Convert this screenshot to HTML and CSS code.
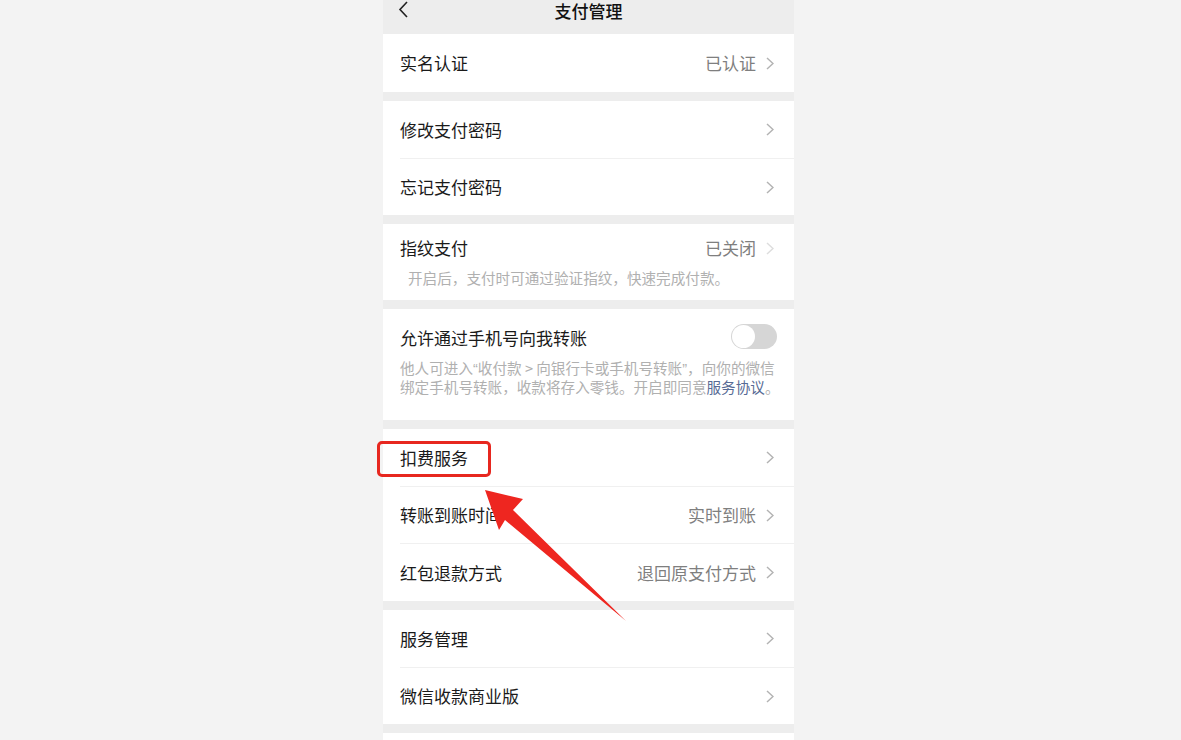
FILE: index.html
```html
<!DOCTYPE html>
<html lang="zh">
<head>
<meta charset="utf-8">
<title>支付管理</title>
<link rel="stylesheet" href="styles.css">
</head>
<body>
<div class="stage">
  <div class="phone">
    <header class="topbar">
      <span class="back"><svg width="12" height="18" viewBox="0 0 12 18"><polyline points="9,1 2,8.5 9,16" fill="none" stroke="#222" stroke-width="1.6"/></svg></span>
      <span class="title">支付管理</span>
      <span class="back"></span>
    </header>

    <section class="card">
      <div class="row row-tall"><div class="row-body"><span class="label">实名认证</span><span class="value">已认证</span><svg class="chev" width="8" height="13" viewBox="0 0 8 13"><polyline points="1,1 7,6.5 1,12"/></svg></div></div>
    </section>

    <section class="card">
      <div class="row"><div class="row-body"><span class="label">修改支付密码</span><svg class="chev" width="8" height="13" viewBox="0 0 8 13"><polyline points="1,1 7,6.5 1,12"/></svg></div></div>
      <div class="row"><div class="row-body divided"><span class="label">忘记支付密码</span><svg class="chev" width="8" height="13" viewBox="0 0 8 13"><polyline points="1,1 7,6.5 1,12"/></svg></div></div>
    </section>

    <section class="card block fp">
      <div class="block-head"><span class="label">指纹支付</span><span class="value">已关闭</span><svg class="chev light" width="8" height="13" viewBox="0 0 8 13"><polyline points="1,1 7,6.5 1,12"/></svg></div>
      <div class="desc fp-desc">开启后，支付时可通过验证指纹，快速完成付款。</div>
    </section>

    <section class="card block phone-transfer">
      <div class="block-head"><span class="label">允许通过手机号向我转账</span><span class="toggle"><span class="knob"></span></span></div>
      <div class="desc tdesc"><span class="line">他人可进入<span class="q">“</span>收付款 &gt; 向银行卡或手机号转账<span class="q">”</span>，向你的微信</span><span class="line">绑定手机号转账，收款将存入零钱。开启即同意<span class="link">服务协议</span>。</span></div>
    </section>

    <section class="card">
      <div class="row"><div class="row-body"><span class="label">扣费服务</span><svg class="chev" width="8" height="13" viewBox="0 0 8 13"><polyline points="1,1 7,6.5 1,12"/></svg></div></div>
      <div class="row"><div class="row-body divided"><span class="label">转账到账时间</span><span class="value">实时到账</span><svg class="chev" width="8" height="13" viewBox="0 0 8 13"><polyline points="1,1 7,6.5 1,12"/></svg></div></div>
      <div class="row row-tall"><div class="row-body divided"><span class="label">红包退款方式</span><span class="value">退回原支付方式</span><svg class="chev" width="8" height="13" viewBox="0 0 8 13"><polyline points="1,1 7,6.5 1,12"/></svg></div></div>
    </section>

    <section class="card">
      <div class="row"><div class="row-body"><span class="label">服务管理</span><svg class="chev" width="8" height="13" viewBox="0 0 8 13"><polyline points="1,1 7,6.5 1,12"/></svg></div></div>
      <div class="row"><div class="row-body divided"><span class="label">微信收款商业版</span><svg class="chev" width="8" height="13" viewBox="0 0 8 13"><polyline points="1,1 7,6.5 1,12"/></svg></div></div>
    </section>

    <section class="card tail"></section>
  </div>

  <div class="highlight"></div>
  <svg class="arrow" width="1181" height="740" viewBox="0 0 1181 740">
    <polygon points="485,490 523,499 513,510 626,621 505,520 499,530" fill="#ee2620"/>
  </svg>
</div>
</body>
</html>
```

FILE: styles.css
```css
html, body {
  margin: 0;
  padding: 0;
}
body {
  background: #f3f3f3;
  font-family: "Noto Sans CJK SC", "Noto Sans", sans-serif;
  color: #1a1a1a;
  height: 740px;
  overflow: hidden;
}
.stage {
  position: relative;
  width: 1181px;
  height: 740px;
}
.phone {
  width: 411px;
  margin-left: 383px;
  height: 740px;
  background: #ededed;
  display: flex;
  flex-direction: column;
}
.topbar {
  height: 34px;
  display: flex;
  align-items: flex-start;
  background: #ededed;
}
.topbar .back {
  width: 40px;
  padding-left: 15px;
  box-sizing: border-box;
  height: 20px;
  display: flex;
  align-items: center;
}
.topbar .title {
  flex: 1;
  text-align: center;
  font-size: 17px;
  line-height: 22px;
  font-weight: 500;
  color: #111;
}
.card {
  background: #fff;
  margin-bottom: 9px;
}
.row {
  height: 57px;
  padding-left: 17px;
  display: flex;
}
.row-tall {
  height: 58px;
}
.row-body {
  flex: 1;
  display: flex;
  align-items: center;
  padding-right: 20px;
}
.row-body.divided {
  border-top: 1px solid #f0f0f0;
}
.label {
  flex: 1;
  font-size: 17px;
  line-height: 24px;
  color: #1a1a1a;
}
.value {
  font-size: 17px;
  line-height: 24px;
  color: #7f7f7f;
  margin-right: 10px;
}
.chev polyline {
  fill: none;
  stroke: #b3b3b3;
  stroke-width: 1.5;
}
.chev.light polyline {
  stroke: #dddddd;
}
.block {
  padding: 12px 20px 12px 17px;
}
.block-head {
  display: flex;
  align-items: center;
  height: 24px;
}
.desc {
  font-size: 14.6px;
  color: #b0b0b0;
}
.fp-desc {
  margin-top: 8px;
  line-height: 20px;
  padding-left: 8px;
}
.phone-transfer {
  padding: 17px 17px 24px 17px;
}
.tdesc {
  margin-top: 8px;
  line-height: 19px;
  display: flex;
  flex-direction: column;
}
.tdesc .line {
  white-space: nowrap;
  display: block;
  height: 19px;
}
.tdesc .q {
  font-family: "Liberation Sans", sans-serif;
  line-height: 1;
}
.link {
  color: #576b95;
}
.toggle {
  width: 46px;
  height: 25px;
  border-radius: 13px;
  background: #d6d6d6;
  display: flex;
  align-items: center;
  padding: 1px;
  box-sizing: border-box;
  margin-top: -3px;
}
.knob {
  width: 23px;
  height: 23px;
  border-radius: 50%;
  background: #fff;
}
.tail {
  flex: 1;
  margin-bottom: 0;
}
.highlight {
  position: absolute;
  left: 377px;
  top: 441px;
  width: 114px;
  height: 36px;
  box-sizing: border-box;
  border: 3px solid #e7271f;
  border-radius: 5px;
}
.arrow {
  position: absolute;
  left: 0;
  top: 0;
  pointer-events: none;
}
```
